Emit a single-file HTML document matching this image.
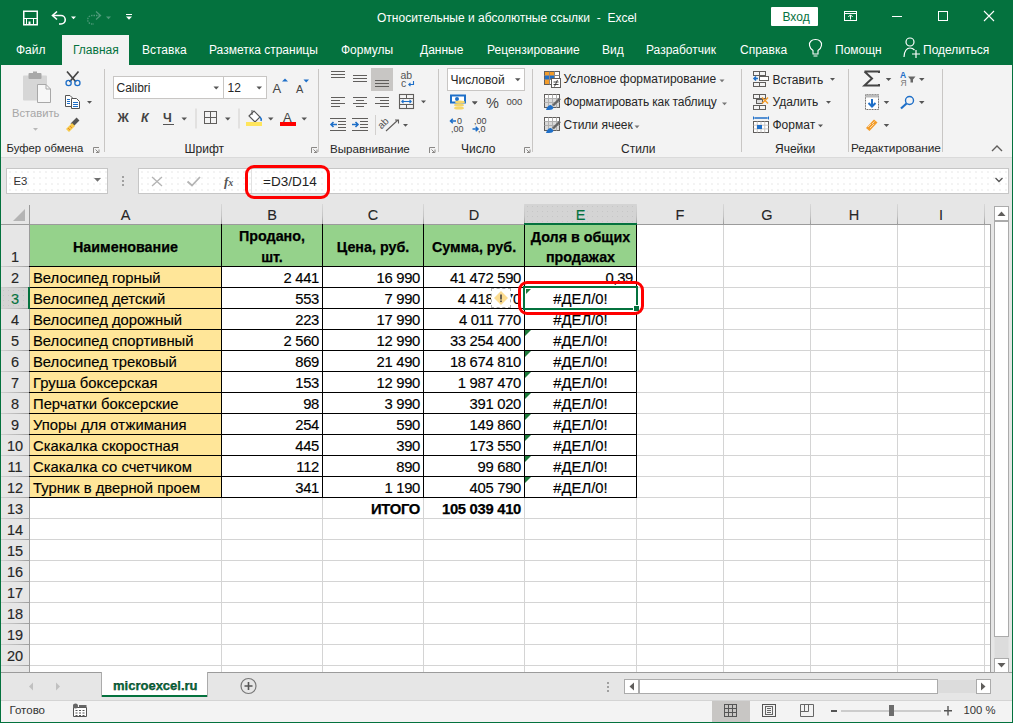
<!DOCTYPE html>
<html><head><meta charset="utf-8">
<style>
*{box-sizing:border-box;}
html,body{margin:0;padding:0;}
body{width:1013px;height:723px;position:relative;overflow:hidden;font-family:"Liberation Sans",sans-serif;background:#e6e6e6;}
.a{position:absolute;}
.t{position:absolute;white-space:nowrap;line-height:1;}
.tab{position:absolute;top:43px;font-size:12px;color:#fff;white-space:nowrap;line-height:14px;}
.glabel{position:absolute;top:143px;font-size:12px;color:#262626;white-space:nowrap;line-height:13px;}
.rt{position:absolute;font-size:12px;color:#262626;white-space:nowrap;line-height:13px;}
.dd{position:absolute;width:0;height:0;border-left:3px solid transparent;border-right:3px solid transparent;border-top:3px solid #5a5a5a;}
.colh{position:absolute;top:205px;height:19px;font-size:14.5px;color:#262626;-webkit-text-stroke:0.1px currentColor;text-align:center;line-height:20px;}
.rowh{position:absolute;left:1px;width:28px;font-size:14.5px;color:#262626;-webkit-text-stroke:0.15px currentColor;text-align:center;line-height:21px;height:20px;}
.c{position:absolute;font-size:14.8px;color:#000;-webkit-text-stroke:0.15px #000;white-space:nowrap;line-height:21px;height:20px;}
.r{text-align:right;letter-spacing:-0.3px;}
.ctr{text-align:center;}
.b{font-weight:bold;-webkit-text-stroke:0.25px #000;}
svg{position:absolute;overflow:visible;}
</style></head>
<body>

<div class="a" style="left:0;top:0;width:1013px;height:65px;background:#04723e;"></div>
<div class="t" style="left:377px;top:12px;font-size:12px;color:#fff;">Относительные и абсолютные ссылки&nbsp; -&nbsp; Excel</div>
<div class="a" style="left:62px;top:35px;width:67px;height:30px;background:#f3f3f3;"></div>
<div class="tab" style="left:16px;color:#fff;">Файл</div>
<div class="tab" style="left:73px;color:#04723e;">Главная</div>
<div class="tab" style="left:142px;color:#fff;">Вставка</div>
<div class="tab" style="left:209px;color:#fff;">Разметка страницы</div>
<div class="tab" style="left:341px;color:#fff;">Формулы</div>
<div class="tab" style="left:420px;color:#fff;">Данные</div>
<div class="tab" style="left:487px;color:#fff;">Рецензирование</div>
<div class="tab" style="left:602px;color:#fff;">Вид</div>
<div class="tab" style="left:646px;color:#fff;">Разработчик</div>
<div class="tab" style="left:740px;color:#fff;">Справка</div>
<div class="tab" style="left:835px;color:#fff;">Помощн</div>
<div class="tab" style="left:923px;color:#fff;">Поделиться</div>
<div class="a" style="left:0;top:65px;width:1013px;height:92px;background:#f3f3f3;"></div>
<div class="a" style="left:0;top:157px;width:1013px;height:1px;background:#dadada;"></div>
<div class="a" style="left:6px;top:168px;width:102px;height:26px;background:#fff radial-gradient(circle,#ededed 0.6px,transparent 0.9px) 0 0/6px 6px;border:1px solid #c6c6c6;"></div>
<div class="t" style="left:13.5px;top:176.2px;font-size:11.3px;color:#333;">E3</div>
<div class="a" style="left:138px;top:168px;width:871px;height:26px;background:#fff radial-gradient(circle,#ededed 0.6px,transparent 0.9px) 0 0/6px 6px;border:1px solid #c6c6c6;"></div>
<div class="t" style="left:263px;top:175px;font-size:13.5px;color:#222;">=D3/D14</div>
<div class="a" style="left:30px;top:225px;width:960px;height:447px;background:#fff;"></div>
<div class="a" style="left:1px;top:205px;width:989px;height:19px;background:#e6e6e6;"></div>
<div class="a" style="left:1px;top:225px;width:28px;height:447px;background:#e6e6e6;"></div>
<div class="a" style="left:525px;top:204px;width:111px;height:20px;background:#d4d4d4 radial-gradient(circle,#c6c6c6 0.7px,transparent 0.9px) 0 0/5px 5px;"></div>
<div class="a" style="left:1px;top:288px;width:28px;height:20px;background:#d4d4d4 radial-gradient(circle,#c6c6c6 0.7px,transparent 0.9px) 0 0/5px 5px;"></div>
<div class="a" style="left:30px;top:225px;width:606px;height:41px;background:#95d28b;"></div>
<div class="a" style="left:30px;top:267px;width:191px;height:230px;background:#ffe699;"></div>
<div class="a" style="left:221px;top:225px;width:1px;height:447px;background:#d4d4d4;"></div>
<div class="a" style="left:322px;top:225px;width:1px;height:447px;background:#d4d4d4;"></div>
<div class="a" style="left:423px;top:225px;width:1px;height:447px;background:#d4d4d4;"></div>
<div class="a" style="left:524px;top:225px;width:1px;height:447px;background:#d4d4d4;"></div>
<div class="a" style="left:636px;top:225px;width:1px;height:447px;background:#d4d4d4;"></div>
<div class="a" style="left:723px;top:225px;width:1px;height:447px;background:#d4d4d4;"></div>
<div class="a" style="left:810px;top:225px;width:1px;height:447px;background:#d4d4d4;"></div>
<div class="a" style="left:897px;top:225px;width:1px;height:447px;background:#d4d4d4;"></div>
<div class="a" style="left:984px;top:225px;width:1px;height:447px;background:#d4d4d4;"></div>
<div class="a" style="left:30px;top:266px;width:960px;height:1px;background:#d4d4d4;"></div>
<div class="a" style="left:30px;top:287px;width:960px;height:1px;background:#d4d4d4;"></div>
<div class="a" style="left:30px;top:308px;width:960px;height:1px;background:#d4d4d4;"></div>
<div class="a" style="left:30px;top:329px;width:960px;height:1px;background:#d4d4d4;"></div>
<div class="a" style="left:30px;top:350px;width:960px;height:1px;background:#d4d4d4;"></div>
<div class="a" style="left:30px;top:371px;width:960px;height:1px;background:#d4d4d4;"></div>
<div class="a" style="left:30px;top:392px;width:960px;height:1px;background:#d4d4d4;"></div>
<div class="a" style="left:30px;top:413px;width:960px;height:1px;background:#d4d4d4;"></div>
<div class="a" style="left:30px;top:434px;width:960px;height:1px;background:#d4d4d4;"></div>
<div class="a" style="left:30px;top:455px;width:960px;height:1px;background:#d4d4d4;"></div>
<div class="a" style="left:30px;top:476px;width:960px;height:1px;background:#d4d4d4;"></div>
<div class="a" style="left:30px;top:497px;width:960px;height:1px;background:#d4d4d4;"></div>
<div class="a" style="left:30px;top:518px;width:960px;height:1px;background:#d4d4d4;"></div>
<div class="a" style="left:30px;top:539px;width:960px;height:1px;background:#d4d4d4;"></div>
<div class="a" style="left:30px;top:560px;width:960px;height:1px;background:#d4d4d4;"></div>
<div class="a" style="left:30px;top:581px;width:960px;height:1px;background:#d4d4d4;"></div>
<div class="a" style="left:30px;top:602px;width:960px;height:1px;background:#d4d4d4;"></div>
<div class="a" style="left:30px;top:623px;width:960px;height:1px;background:#d4d4d4;"></div>
<div class="a" style="left:30px;top:644px;width:960px;height:1px;background:#d4d4d4;"></div>
<div class="a" style="left:30px;top:665px;width:960px;height:1px;background:#d4d4d4;"></div>
<div class="a" style="left:221px;top:204px;width:1px;height:20px;background:linear-gradient(#d8d8d8,#c4c4c4 60%,#9e9e9e);"></div>
<div class="a" style="left:322px;top:204px;width:1px;height:20px;background:linear-gradient(#d8d8d8,#c4c4c4 60%,#9e9e9e);"></div>
<div class="a" style="left:423px;top:204px;width:1px;height:20px;background:linear-gradient(#d8d8d8,#c4c4c4 60%,#9e9e9e);"></div>
<div class="a" style="left:524px;top:204px;width:1px;height:20px;background:linear-gradient(#d8d8d8,#c4c4c4 60%,#9e9e9e);"></div>
<div class="a" style="left:636px;top:204px;width:1px;height:20px;background:linear-gradient(#d8d8d8,#c4c4c4 60%,#9e9e9e);"></div>
<div class="a" style="left:723px;top:204px;width:1px;height:20px;background:linear-gradient(#d8d8d8,#c4c4c4 60%,#9e9e9e);"></div>
<div class="a" style="left:810px;top:204px;width:1px;height:20px;background:linear-gradient(#d8d8d8,#c4c4c4 60%,#9e9e9e);"></div>
<div class="a" style="left:897px;top:204px;width:1px;height:20px;background:linear-gradient(#d8d8d8,#c4c4c4 60%,#9e9e9e);"></div>
<div class="a" style="left:984px;top:204px;width:1px;height:20px;background:linear-gradient(#d8d8d8,#c4c4c4 60%,#9e9e9e);"></div>
<div class="a" style="left:1px;top:266px;width:28px;height:1px;background:linear-gradient(90deg,#d0d0d0,#b8b8b8 60%,#9e9e9e);"></div>
<div class="a" style="left:1px;top:287px;width:28px;height:1px;background:linear-gradient(90deg,#d0d0d0,#b8b8b8 60%,#9e9e9e);"></div>
<div class="a" style="left:1px;top:308px;width:28px;height:1px;background:linear-gradient(90deg,#d0d0d0,#b8b8b8 60%,#9e9e9e);"></div>
<div class="a" style="left:1px;top:329px;width:28px;height:1px;background:linear-gradient(90deg,#d0d0d0,#b8b8b8 60%,#9e9e9e);"></div>
<div class="a" style="left:1px;top:350px;width:28px;height:1px;background:linear-gradient(90deg,#d0d0d0,#b8b8b8 60%,#9e9e9e);"></div>
<div class="a" style="left:1px;top:371px;width:28px;height:1px;background:linear-gradient(90deg,#d0d0d0,#b8b8b8 60%,#9e9e9e);"></div>
<div class="a" style="left:1px;top:392px;width:28px;height:1px;background:linear-gradient(90deg,#d0d0d0,#b8b8b8 60%,#9e9e9e);"></div>
<div class="a" style="left:1px;top:413px;width:28px;height:1px;background:linear-gradient(90deg,#d0d0d0,#b8b8b8 60%,#9e9e9e);"></div>
<div class="a" style="left:1px;top:434px;width:28px;height:1px;background:linear-gradient(90deg,#d0d0d0,#b8b8b8 60%,#9e9e9e);"></div>
<div class="a" style="left:1px;top:455px;width:28px;height:1px;background:linear-gradient(90deg,#d0d0d0,#b8b8b8 60%,#9e9e9e);"></div>
<div class="a" style="left:1px;top:476px;width:28px;height:1px;background:linear-gradient(90deg,#d0d0d0,#b8b8b8 60%,#9e9e9e);"></div>
<div class="a" style="left:1px;top:497px;width:28px;height:1px;background:linear-gradient(90deg,#d0d0d0,#b8b8b8 60%,#9e9e9e);"></div>
<div class="a" style="left:1px;top:518px;width:28px;height:1px;background:linear-gradient(90deg,#d0d0d0,#b8b8b8 60%,#9e9e9e);"></div>
<div class="a" style="left:1px;top:539px;width:28px;height:1px;background:linear-gradient(90deg,#d0d0d0,#b8b8b8 60%,#9e9e9e);"></div>
<div class="a" style="left:1px;top:560px;width:28px;height:1px;background:linear-gradient(90deg,#d0d0d0,#b8b8b8 60%,#9e9e9e);"></div>
<div class="a" style="left:1px;top:581px;width:28px;height:1px;background:linear-gradient(90deg,#d0d0d0,#b8b8b8 60%,#9e9e9e);"></div>
<div class="a" style="left:1px;top:602px;width:28px;height:1px;background:linear-gradient(90deg,#d0d0d0,#b8b8b8 60%,#9e9e9e);"></div>
<div class="a" style="left:1px;top:623px;width:28px;height:1px;background:linear-gradient(90deg,#d0d0d0,#b8b8b8 60%,#9e9e9e);"></div>
<div class="a" style="left:1px;top:644px;width:28px;height:1px;background:linear-gradient(90deg,#d0d0d0,#b8b8b8 60%,#9e9e9e);"></div>
<div class="a" style="left:1px;top:665px;width:28px;height:1px;background:linear-gradient(90deg,#d0d0d0,#b8b8b8 60%,#9e9e9e);"></div>
<div class="a" style="left:1px;top:224px;width:989px;height:1px;background:#9b9b9b;"></div>
<div class="a" style="left:29px;top:205px;width:1px;height:467px;background:#9b9b9b;"></div>
<div class="a" style="left:990px;top:224px;width:1px;height:448px;background:#9b9b9b;"></div>
<svg style="left:12px;top:208px;" width="14" height="14"><polygon points="13,1 13,13 1,13" fill="#b4b4b4"/></svg>
<div class="a" style="left:29px;top:266px;width:608px;height:1px;background:#000;"></div>
<div class="a" style="left:29px;top:287px;width:608px;height:1px;background:#000;"></div>
<div class="a" style="left:29px;top:308px;width:608px;height:1px;background:#000;"></div>
<div class="a" style="left:29px;top:329px;width:608px;height:1px;background:#000;"></div>
<div class="a" style="left:29px;top:350px;width:608px;height:1px;background:#000;"></div>
<div class="a" style="left:29px;top:371px;width:608px;height:1px;background:#000;"></div>
<div class="a" style="left:29px;top:392px;width:608px;height:1px;background:#000;"></div>
<div class="a" style="left:29px;top:413px;width:608px;height:1px;background:#000;"></div>
<div class="a" style="left:29px;top:434px;width:608px;height:1px;background:#000;"></div>
<div class="a" style="left:29px;top:455px;width:608px;height:1px;background:#000;"></div>
<div class="a" style="left:29px;top:476px;width:608px;height:1px;background:#000;"></div>
<div class="a" style="left:29px;top:497px;width:608px;height:1px;background:#000;"></div>
<div class="a" style="left:221px;top:224px;width:1px;height:274px;background:#000;"></div>
<div class="a" style="left:322px;top:224px;width:1px;height:274px;background:#000;"></div>
<div class="a" style="left:423px;top:224px;width:1px;height:274px;background:#000;"></div>
<div class="a" style="left:524px;top:224px;width:1px;height:274px;background:#000;"></div>
<div class="a" style="left:636px;top:224px;width:1px;height:274px;background:#000;"></div>
<div class="a" style="left:524px;top:223px;width:113px;height:2px;background:#04723e;"></div>
<div class="a" style="left:28px;top:287px;width:2px;height:22px;background:#04723e;"></div>
<div class="colh" style="left:30px;width:191px;color:#262626;">A</div>
<div class="colh" style="left:222px;width:100px;color:#262626;">B</div>
<div class="colh" style="left:323px;width:100px;color:#262626;">C</div>
<div class="colh" style="left:424px;width:100px;color:#262626;">D</div>
<div class="colh" style="left:525px;width:111px;color:#04723e;">E</div>
<div class="colh" style="left:637px;width:86px;color:#262626;">F</div>
<div class="colh" style="left:724px;width:86px;color:#262626;">G</div>
<div class="colh" style="left:811px;width:86px;color:#262626;">H</div>
<div class="colh" style="left:898px;width:86px;color:#262626;">I</div>
<div class="rowh" style="top:247px;color:#262626;">1</div>
<div class="rowh" style="top:268px;color:#262626;">2</div>
<div class="rowh" style="top:289px;color:#04723e;">3</div>
<div class="rowh" style="top:310px;color:#262626;">4</div>
<div class="rowh" style="top:331px;color:#262626;">5</div>
<div class="rowh" style="top:352px;color:#262626;">6</div>
<div class="rowh" style="top:373px;color:#262626;">7</div>
<div class="rowh" style="top:394px;color:#262626;">8</div>
<div class="rowh" style="top:415px;color:#262626;">9</div>
<div class="rowh" style="top:436px;color:#262626;">10</div>
<div class="rowh" style="top:457px;color:#262626;">11</div>
<div class="rowh" style="top:478px;color:#262626;">12</div>
<div class="rowh" style="top:499px;color:#262626;">13</div>
<div class="rowh" style="top:520px;color:#262626;">14</div>
<div class="rowh" style="top:541px;color:#262626;">15</div>
<div class="rowh" style="top:562px;color:#262626;">16</div>
<div class="rowh" style="top:583px;color:#262626;">17</div>
<div class="rowh" style="top:604px;color:#262626;">18</div>
<div class="rowh" style="top:625px;color:#262626;">19</div>
<div class="rowh" style="top:646px;color:#262626;">20</div>
<div class="c " style="left:33px;top:268px;width:188px;">Велосипед горный</div>
<div class="c r" style="left:222px;top:268px;width:97px;">2 441</div>
<div class="c r" style="left:323px;top:268px;width:97px;">16 990</div>
<div class="c r" style="left:424px;top:268px;width:97px;">41 472 590</div>
<div class="c r" style="left:525px;top:268px;width:108px;">0,39</div>
<div class="c " style="left:33px;top:289px;width:188px;">Велосипед детский</div>
<div class="c r" style="left:222px;top:289px;width:97px;">553</div>
<div class="c r" style="left:323px;top:289px;width:97px;">7 990</div>
<div class="c r" style="left:424px;top:289px;width:97px;">4 418 470</div>
<div class="c ctr" style="left:525px;top:289px;width:111px;">#ДЕЛ/0!</div>
<div class="c " style="left:33px;top:310px;width:188px;">Велосипед дорожный</div>
<div class="c r" style="left:222px;top:310px;width:97px;">223</div>
<div class="c r" style="left:323px;top:310px;width:97px;">17 990</div>
<div class="c r" style="left:424px;top:310px;width:97px;">4 011 770</div>
<div class="c ctr" style="left:525px;top:310px;width:111px;">#ДЕЛ/0!</div>
<div class="c " style="left:33px;top:331px;width:188px;">Велосипед спортивный</div>
<div class="c r" style="left:222px;top:331px;width:97px;">2 560</div>
<div class="c r" style="left:323px;top:331px;width:97px;">12 990</div>
<div class="c r" style="left:424px;top:331px;width:97px;">33 254 400</div>
<div class="c ctr" style="left:525px;top:331px;width:111px;">#ДЕЛ/0!</div>
<div class="c " style="left:33px;top:352px;width:188px;">Велосипед трековый</div>
<div class="c r" style="left:222px;top:352px;width:97px;">869</div>
<div class="c r" style="left:323px;top:352px;width:97px;">21 490</div>
<div class="c r" style="left:424px;top:352px;width:97px;">18 674 810</div>
<div class="c ctr" style="left:525px;top:352px;width:111px;">#ДЕЛ/0!</div>
<div class="c " style="left:33px;top:373px;width:188px;">Груша боксерская</div>
<div class="c r" style="left:222px;top:373px;width:97px;">153</div>
<div class="c r" style="left:323px;top:373px;width:97px;">12 990</div>
<div class="c r" style="left:424px;top:373px;width:97px;">1 987 470</div>
<div class="c ctr" style="left:525px;top:373px;width:111px;">#ДЕЛ/0!</div>
<div class="c " style="left:33px;top:394px;width:188px;">Перчатки боксерские</div>
<div class="c r" style="left:222px;top:394px;width:97px;">98</div>
<div class="c r" style="left:323px;top:394px;width:97px;">3 990</div>
<div class="c r" style="left:424px;top:394px;width:97px;">391 020</div>
<div class="c ctr" style="left:525px;top:394px;width:111px;">#ДЕЛ/0!</div>
<div class="c " style="left:33px;top:415px;width:188px;">Упоры для отжимания</div>
<div class="c r" style="left:222px;top:415px;width:97px;">254</div>
<div class="c r" style="left:323px;top:415px;width:97px;">590</div>
<div class="c r" style="left:424px;top:415px;width:97px;">149 860</div>
<div class="c ctr" style="left:525px;top:415px;width:111px;">#ДЕЛ/0!</div>
<div class="c " style="left:33px;top:436px;width:188px;">Скакалка скоростная</div>
<div class="c r" style="left:222px;top:436px;width:97px;">445</div>
<div class="c r" style="left:323px;top:436px;width:97px;">390</div>
<div class="c r" style="left:424px;top:436px;width:97px;">173 550</div>
<div class="c ctr" style="left:525px;top:436px;width:111px;">#ДЕЛ/0!</div>
<div class="c " style="left:33px;top:457px;width:188px;">Скакалка со счетчиком</div>
<div class="c r" style="left:222px;top:457px;width:97px;">112</div>
<div class="c r" style="left:323px;top:457px;width:97px;">890</div>
<div class="c r" style="left:424px;top:457px;width:97px;">99 680</div>
<div class="c ctr" style="left:525px;top:457px;width:111px;">#ДЕЛ/0!</div>
<div class="c " style="left:33px;top:478px;width:188px;">Турник в дверной проем</div>
<div class="c r" style="left:222px;top:478px;width:97px;">341</div>
<div class="c r" style="left:323px;top:478px;width:97px;">1 190</div>
<div class="c r" style="left:424px;top:478px;width:97px;">405 790</div>
<div class="c ctr" style="left:525px;top:478px;width:111px;">#ДЕЛ/0!</div>
<div class="c r b" style="left:323px;top:499px;width:97px;">ИТОГО</div>
<div class="c r b" style="left:424px;top:499px;width:97px;">105 039 410</div>
<div class="t b ctr" style="left:30px;top:239.6px;width:191px;font-size:14.3px;color:#000;-webkit-text-stroke:0.25px #000;">Наименование</div>
<div class="t b ctr" style="left:222px;top:229.1px;width:100px;font-size:14.3px;color:#000;-webkit-text-stroke:0.25px #000;">Продано,</div>
<div class="t b ctr" style="left:222px;top:249.6px;width:100px;font-size:14.3px;color:#000;-webkit-text-stroke:0.25px #000;">шт.</div>
<div class="t b ctr" style="left:323px;top:239.6px;width:100px;font-size:14.3px;color:#000;-webkit-text-stroke:0.25px #000;">Цена, руб.</div>
<div class="t b ctr" style="left:424px;top:239.6px;width:100px;font-size:14.3px;color:#000;-webkit-text-stroke:0.25px #000;">Сумма, руб.</div>
<div class="t b ctr" style="left:525px;top:229.6px;width:111px;font-size:14.3px;color:#000;-webkit-text-stroke:0.25px #000;">Доля в общих</div>
<div class="t b ctr" style="left:525px;top:249.6px;width:111px;font-size:14.3px;color:#000;-webkit-text-stroke:0.25px #000;">продажах</div>
<svg style="left:525px;top:330px;" width="6" height="6"><polygon points="0,0 6,0 0,6" fill="#1d7a3a"/></svg>
<svg style="left:525px;top:351px;" width="6" height="6"><polygon points="0,0 6,0 0,6" fill="#1d7a3a"/></svg>
<svg style="left:525px;top:372px;" width="6" height="6"><polygon points="0,0 6,0 0,6" fill="#1d7a3a"/></svg>
<svg style="left:525px;top:393px;" width="6" height="6"><polygon points="0,0 6,0 0,6" fill="#1d7a3a"/></svg>
<svg style="left:525px;top:414px;" width="6" height="6"><polygon points="0,0 6,0 0,6" fill="#1d7a3a"/></svg>
<svg style="left:525px;top:435px;" width="6" height="6"><polygon points="0,0 6,0 0,6" fill="#1d7a3a"/></svg>
<svg style="left:525px;top:456px;" width="6" height="6"><polygon points="0,0 6,0 0,6" fill="#1d7a3a"/></svg>
<svg style="left:525px;top:477px;" width="6" height="6"><polygon points="0,0 6,0 0,6" fill="#1d7a3a"/></svg>
<div class="a" style="left:523px;top:286px;width:115px;height:24px;border:2px solid #04723e;"></div>
<div class="a" style="left:633px;top:305px;width:7px;height:7px;background:#fff;"></div>
<div class="a" style="left:634px;top:306px;width:5px;height:5px;background:#04723e;"></div>
<svg style="left:526px;top:289px;" width="5" height="5"><polygon points="0,0 5,0 0,5" fill="#1d7a3a"/></svg>
<div class="a" style="left:491px;top:288px;width:20px;height:20px;background:#fff;border:1px dashed #b0b0b0;"></div>
<svg style="left:493px;top:290px;" width="16" height="16"><polygon points="8,1 15,8 8,15 1,8" fill="#fcdc90"/><rect x="7.2" y="4.5" width="1.6" height="5" fill="#444"/><rect x="7.2" y="10.5" width="1.6" height="1.6" fill="#444"/></svg>
<div class="a" style="left:518px;top:281px;width:126px;height:34px;border:3px solid #ff0000;border-radius:9px;"></div>
<div class="a" style="left:245px;top:165px;width:85px;height:34px;border:3px solid #ff0000;border-radius:9px;"></div>
<div class="a" style="left:1px;top:672px;width:1011px;height:1px;background:#9b9b9b;"></div>
<div class="a" style="left:1px;top:673px;width:1011px;height:27px;background:#e6e6e6;"></div>
<div class="a" style="left:101px;top:672px;width:107px;height:25px;background:#fff;border-left:1px solid #ababab;border-right:1px solid #ababab;"></div>
<div class="a" style="left:102px;top:695px;width:105px;height:2px;background:#04723e;"></div>
<div class="t b" style="left:113px;top:679px;font-size:13px;color:#04723e;">microexcel.ru</div>
<div class="a" style="left:1px;top:700px;width:1011px;height:1px;background:#d4d4d4;"></div>
<div class="a" style="left:1px;top:701px;width:1011px;height:21px;background:#f3f3f3;"></div>
<div class="t" style="left:9.5px;top:704.5px;font-size:11.5px;color:#333;">Готово</div>
<div class="a" style="left:712px;top:701px;width:37px;height:21px;background:#d2d2d2;"></div>
<div class="t" style="left:963.5px;top:705px;font-size:11.3px;color:#333;">100 %</div>
<svg style="left:0;top:0;" width="1013" height="723"><rect x="23.75" y="11.25" width="13.5" height="13.5" fill="none" stroke="#fff" stroke-width="1.5" /><line x1="24" y1="18.5" x2="37" y2="18.5" stroke="#fff" stroke-width="1"/><path d="M26.5 25 V18.5 M33.5 25 V18.5" fill="none" stroke="#fff" stroke-width="1" /><rect x="28.5" y="21.5" width="2" height="3.5" fill="#fff" stroke="none" stroke-width="1" /><path d="M53 15.5 H61 A4.2 4.2 0 0 1 61 24 H59" fill="none" stroke="#fff" stroke-width="1.6" /><path d="M57 11.5 L52.5 15.5 L57 19.5" fill="none" stroke="#fff" stroke-width="1.6" /><polygon points="71.0,16.5 76.0,16.5 73.5,19.2" fill="#fff"/><path d="M100 15.5 H92 A4.2 4.2 0 0 0 92 24 H94" fill="none" stroke="#4f9a7a" stroke-width="1.3" stroke-dasharray="1.5 1"/><path d="M96 11.5 L100.5 15.5 L96 19.5" fill="none" stroke="#4f9a7a" stroke-width="1.3" /><polygon points="106.0,16.5 111.0,16.5 108.5,19.2" fill="#4f9a7a"/><rect x="126" y="14" width="6" height="1" fill="#fff" stroke="none" stroke-width="1" /><polygon points="126.0,16.5 132.0,16.5 129.0,19.8" fill="#fff"/><rect x="771" y="7" width="47" height="19" fill="#fff" stroke="none" stroke-width="1" rx="1"/><rect x="844.5" y="11.5" width="12" height="9" fill="none" stroke="#fff" stroke-width="1" /><line x1="844.5" y1="13.5" x2="856.5" y2="13.5" stroke="#fff" stroke-width="1"/><path d="M850.5 19.5 V15 M848.3 17 L850.5 14.8 L852.7 17" fill="none" stroke="#fff" stroke-width="1" /><line x1="892" y1="16.5" x2="902" y2="16.5" stroke="#fff" stroke-width="1"/><rect x="938.5" y="11.5" width="9" height="9" fill="none" stroke="#fff" stroke-width="1" /><path d="M984 11 L994 21 M994 11 L984 21" fill="none" stroke="#fff" stroke-width="1.1" /><path d="M813 54 V50.5 C809 48 808.5 43 811 41 C813 39 818 39 820 41 C822.5 43 822 48 818 50.5 V54 Z" fill="none" stroke="#fff" stroke-width="1.1" /><line x1="813.5" y1="56" x2="817.5" y2="56" stroke="#fff" stroke-width="1"/><path d="M910 42 m-4 0 a4 4 0 1 0 8 0 a4 4 0 1 0 -8 0 M904 57 C904 51 907 48 910 48 C912 48 913.5 49 914.5 50" fill="none" stroke="#fff" stroke-width="1.2" /><path d="M916 50 V58 M912 54 H920" fill="none" stroke="#fff" stroke-width="1.2" /><rect x="104" y="69" width="1" height="83" fill="#c8c6c4" stroke="none" stroke-width="1" /><rect x="318" y="69" width="1" height="83" fill="#c8c6c4" stroke="none" stroke-width="1" /><rect x="438" y="69" width="1" height="83" fill="#c8c6c4" stroke="none" stroke-width="1" /><rect x="532" y="69" width="1" height="83" fill="#c8c6c4" stroke="none" stroke-width="1" /><rect x="741" y="69" width="1" height="83" fill="#c8c6c4" stroke="none" stroke-width="1" /><rect x="848" y="69" width="1" height="83" fill="#c8c6c4" stroke="none" stroke-width="1" /><rect x="942" y="69" width="1" height="83" fill="#c8c6c4" stroke="none" stroke-width="1" /><path d="M93.5 147.5 H99.0 M93.5 147.5 V153.0" fill="none" stroke="#8a8886" stroke-width="1" /><path d="M95.5 149.5 L98.5 152.5 M96.0 152.5 H99.0 V149.5" fill="none" stroke="#8a8886" stroke-width="1" /><path d="M311.5 147.5 H317.0 M311.5 147.5 V153.0" fill="none" stroke="#8a8886" stroke-width="1" /><path d="M313.5 149.5 L316.5 152.5 M314.0 152.5 H317.0 V149.5" fill="none" stroke="#8a8886" stroke-width="1" /><path d="M429.5 147.5 H435.0 M429.5 147.5 V153.0" fill="none" stroke="#8a8886" stroke-width="1" /><path d="M431.5 149.5 L434.5 152.5 M432.0 152.5 H435.0 V149.5" fill="none" stroke="#8a8886" stroke-width="1" /><path d="M524.5 147.5 H530.0 M524.5 147.5 V153.0" fill="none" stroke="#8a8886" stroke-width="1" /><path d="M526.5 149.5 L529.5 152.5 M527.0 152.5 H530.0 V149.5" fill="none" stroke="#8a8886" stroke-width="1" /><path d="M992 151 L997 146 L1002 151" fill="none" stroke="#605e5c" stroke-width="1.4" /><rect x="23" y="75.5" width="24" height="25" fill="#d6d6d6" stroke="none" stroke-width="1" rx="1"/><rect x="28.5" y="73" width="13" height="6" fill="#a8a8a8" stroke="none" stroke-width="1" rx="1"/><rect x="33" y="71.5" width="4" height="3" fill="#a8a8a8" stroke="none" stroke-width="1" /><path d="M37.5 84.5 H46 L50.5 89 V102.5 H37.5 Z" fill="#f7f7f7" stroke="#a8a8a8" stroke-width="1" /><path d="M46 84.5 V89 H50.5" fill="none" stroke="#a8a8a8" stroke-width="1" /><polygon points="33.0,128.0 38.0,128.0 35.5,130.8" fill="#b8b8b8"/><path d="M67 71.5 L76 82 M78.5 71.5 L69.5 82" fill="none" stroke="#444" stroke-width="1.7" /><circle cx="68.6" cy="83" r="2.6" fill="none" stroke="#1e6fc8" stroke-width="1.3"/><circle cx="77.4" cy="83" r="2.6" fill="none" stroke="#1e6fc8" stroke-width="1.3"/><path d="M65.5 95.5 H70 L72.5 98 V106.5 H65.5 Z" fill="#fff" stroke="#555" stroke-width="1" /><path d="M71.5 98.5 H76.5 L79.5 101.5 V108.5 H71.5 Z" fill="#fff" stroke="#555" stroke-width="1" /><line x1="67" y1="99.5" x2="70" y2="99.5" stroke="#1e6fc8" stroke-width="1"/><line x1="67" y1="101.5" x2="70" y2="101.5" stroke="#1e6fc8" stroke-width="1"/><line x1="67" y1="103.5" x2="70" y2="103.5" stroke="#1e6fc8" stroke-width="1"/><line x1="73" y1="102.5" x2="78" y2="102.5" stroke="#1e6fc8" stroke-width="1"/><line x1="73" y1="104.5" x2="78" y2="104.5" stroke="#1e6fc8" stroke-width="1"/><line x1="73" y1="106.5" x2="78" y2="106.5" stroke="#1e6fc8" stroke-width="1"/><polygon points="87.0,101.0 92.0,101.0 89.5,103.8" fill="#555"/><path d="M72 125 L78 119" fill="none" stroke="#555" stroke-width="4" /><path d="M66 129 L72 123 L75 126 L69 132 Z" fill="#f7c94a" stroke="none" stroke-width="1" /><path d="M68 128 L70 130 M70 126 L72 128" fill="none" stroke="#e8872c" stroke-width="1" /><rect x="113.5" y="76.5" width="110" height="22" fill="#fff" stroke="#c8c6c4" stroke-width="1" /><rect x="223.5" y="76.5" width="43" height="22" fill="#fff" stroke="#c8c6c4" stroke-width="1" /><polygon points="213.5,86.5 219.0,86.5 216.2,89.5" fill="#555"/><polygon points="256.5,86.5 262.0,86.5 259.2,89.5" fill="#555"/><path d="M282 81.5 L285 78.5 L288 81.5 Z" fill="#1e6fc8" stroke="none" stroke-width="1" /><path d="M303.5 79.5 L309 79.5 L306.2 82.5 Z" fill="#1e6fc8" stroke="none" stroke-width="1" /><line x1="163" y1="124.5" x2="174" y2="124.5" stroke="#555" stroke-width="1"/><polygon points="181.5,117.5 187.0,117.5 184.2,120.5" fill="#555"/><rect x="195.5" y="108.5" width="1" height="20" fill="#d2d0ce" stroke="none" stroke-width="1" /><rect x="204.5" y="111.5" width="12" height="12" fill="none" stroke="#605e5c" stroke-width="1" /><line x1="210.5" y1="111.5" x2="210.5" y2="123.5" stroke="#605e5c" stroke-width="1"/><line x1="204.5" y1="117.5" x2="216.5" y2="117.5" stroke="#605e5c" stroke-width="1"/><polygon points="225.0,117.5 230.5,117.5 227.8,120.5" fill="#555"/><rect x="238.5" y="108.5" width="1" height="20" fill="#d2d0ce" stroke="none" stroke-width="1" /><path d="M249 116 L254 111 L260 117 L255 122 Z" fill="#fff" stroke="#555" stroke-width="1.1" /><path d="M252 110 V115" fill="none" stroke="#555" stroke-width="1" /><path d="M260 117 Q262 119 261 121" fill="none" stroke="#1e6fc8" stroke-width="1.6" /><rect x="246" y="122" width="16" height="4" fill="#ffe55c" stroke="none" stroke-width="1" /><polygon points="268.0,117.5 273.5,117.5 270.8,120.5" fill="#555"/><rect x="280" y="122" width="16" height="4" fill="#ff0000" stroke="none" stroke-width="1" /><polygon points="301.5,117.5 307.0,117.5 304.2,120.5" fill="#555"/><line x1="331" y1="71.5" x2="345" y2="71.5" stroke="#605e5c" stroke-width="1"/><line x1="331" y1="74.5" x2="345" y2="74.5" stroke="#605e5c" stroke-width="1"/><line x1="331" y1="77.5" x2="345" y2="77.5" stroke="#605e5c" stroke-width="1"/><line x1="353" y1="75.5" x2="367" y2="75.5" stroke="#605e5c" stroke-width="1"/><line x1="353" y1="78.5" x2="367" y2="78.5" stroke="#605e5c" stroke-width="1"/><line x1="353" y1="81.5" x2="367" y2="81.5" stroke="#605e5c" stroke-width="1"/><rect x="371" y="68" width="22" height="23" fill="#c8c6c4" stroke="none" stroke-width="1" /><line x1="375" y1="80.5" x2="389" y2="80.5" stroke="#605e5c" stroke-width="1"/><line x1="375" y1="83.5" x2="389" y2="83.5" stroke="#605e5c" stroke-width="1"/><line x1="375" y1="86.5" x2="389" y2="86.5" stroke="#605e5c" stroke-width="1"/><path d="M413.5 81 V84.5 H409" fill="none" stroke="#1e6fc8" stroke-width="1.1" /><path d="M410.5 82.8 L408.8 84.5 L410.5 86.2" fill="none" stroke="#1e6fc8" stroke-width="1.1" /><line x1="331" y1="97.5" x2="345" y2="97.5" stroke="#605e5c" stroke-width="1"/><line x1="353" y1="97.5" x2="367" y2="97.5" stroke="#605e5c" stroke-width="1"/><line x1="375" y1="97.5" x2="389" y2="97.5" stroke="#605e5c" stroke-width="1"/><line x1="331" y1="100.5" x2="340" y2="100.5" stroke="#605e5c" stroke-width="1"/><line x1="356" y1="100.5" x2="364" y2="100.5" stroke="#605e5c" stroke-width="1"/><line x1="380" y1="100.5" x2="389" y2="100.5" stroke="#605e5c" stroke-width="1"/><line x1="331" y1="103.5" x2="345" y2="103.5" stroke="#605e5c" stroke-width="1"/><line x1="353" y1="103.5" x2="367" y2="103.5" stroke="#605e5c" stroke-width="1"/><line x1="375" y1="103.5" x2="389" y2="103.5" stroke="#605e5c" stroke-width="1"/><line x1="331" y1="106.5" x2="340" y2="106.5" stroke="#605e5c" stroke-width="1"/><line x1="356" y1="106.5" x2="364" y2="106.5" stroke="#605e5c" stroke-width="1"/><line x1="380" y1="106.5" x2="389" y2="106.5" stroke="#605e5c" stroke-width="1"/><rect x="399.5" y="94.5" width="14" height="14" fill="none" stroke="#605e5c" stroke-width="1.1" /><line x1="399.5" y1="98.5" x2="413.5" y2="98.5" stroke="#605e5c" stroke-width="1"/><line x1="399.5" y1="104.5" x2="413.5" y2="104.5" stroke="#605e5c" stroke-width="1"/><line x1="406.5" y1="94.5" x2="406.5" y2="98.5" stroke="#605e5c" stroke-width="1"/><line x1="406.5" y1="104.5" x2="406.5" y2="108.5" stroke="#605e5c" stroke-width="1"/><path d="M402 101.5 H411 M403.5 99.8 L401.8 101.5 L403.5 103.2 M409.5 99.8 L411.2 101.5 L409.5 103.2" fill="none" stroke="#1e6fc8" stroke-width="1.1" /><polygon points="421.0,100.5 426.0,100.5 423.5,103.2" fill="#555"/><line x1="330" y1="118.5" x2="346" y2="118.5" stroke="#605e5c" stroke-width="1"/><line x1="330" y1="130.5" x2="346" y2="130.5" stroke="#605e5c" stroke-width="1"/><line x1="338" y1="121.5" x2="346" y2="121.5" stroke="#605e5c" stroke-width="1"/><line x1="338" y1="124.5" x2="346" y2="124.5" stroke="#605e5c" stroke-width="1"/><line x1="338" y1="127.5" x2="346" y2="127.5" stroke="#605e5c" stroke-width="1"/><path d="M337 124.5 H331 M333.5 122 L331 124.5 L333.5 127" fill="none" stroke="#1e6fc8" stroke-width="1.6" /><line x1="352" y1="118.5" x2="368" y2="118.5" stroke="#605e5c" stroke-width="1"/><line x1="352" y1="130.5" x2="368" y2="130.5" stroke="#605e5c" stroke-width="1"/><line x1="360" y1="121.5" x2="368" y2="121.5" stroke="#605e5c" stroke-width="1"/><line x1="360" y1="124.5" x2="368" y2="124.5" stroke="#605e5c" stroke-width="1"/><line x1="360" y1="127.5" x2="368" y2="127.5" stroke="#605e5c" stroke-width="1"/><path d="M352 124.5 H358 M355.5 122 L358 124.5 L355.5 127" fill="none" stroke="#1e6fc8" stroke-width="1.6" /><rect x="375" y="115" width="1" height="20" fill="#d2d0ce" stroke="none" stroke-width="1" /><path d="M386 131 L398 120 M395 120 H398.5 V123.5" fill="none" stroke="#605e5c" stroke-width="1.1" /><polygon points="403.0,124.0 408.0,124.0 405.5,126.8" fill="#555"/><rect x="447.5" y="68.5" width="77" height="22" fill="#fff" stroke="#c8c6c4" stroke-width="1" /><polygon points="515.0,78.3 520.5,78.3 517.8,81.3" fill="#555"/><rect x="450" y="94.5" width="16" height="9" fill="#1e6fc8" stroke="none" stroke-width="1" /><rect x="452" y="96.5" width="12" height="5" fill="#fff" stroke="none" stroke-width="1" /><circle cx="457" cy="99" r="2" fill="#1e6fc8"/><ellipse cx="460" cy="102" rx="5" ry="1.6" fill="#f5d66b"/><ellipse cx="459" cy="105" rx="5" ry="1.6" fill="#f5d66b"/><ellipse cx="459" cy="108" rx="5" ry="1.6" fill="#f5d66b"/><polygon points="472.0,101.5 477.5,101.5 474.8,104.5" fill="#555"/><polygon points="472.0,101.5 477.5,101.5 474.8,104.5" fill="#555"/><path d="M456 121 H450.5 M452.8 118.8 L450.5 121 L452.8 123.2" fill="none" stroke="#1e6fc8" stroke-width="1.5" /><path d="M472.5 129 H478 M475.7 126.8 L478 129 L475.7 131.2" fill="none" stroke="#1e6fc8" stroke-width="1.5" /><rect x="544.5" y="71.5" width="15" height="13" fill="#fff" stroke="#605e5c" stroke-width="1" /><rect x="545" y="72" width="9.5" height="3.5" fill="#f39c2a" stroke="none" stroke-width="1" /><rect x="545" y="76" width="9.5" height="3.5" fill="#1e6fc8" stroke="none" stroke-width="1" /><rect x="545" y="80" width="4.5" height="4" fill="#f39c2a" stroke="none" stroke-width="1" /><line x1="549.5" y1="71.5" x2="549.5" y2="84.5" stroke="#8a8886" stroke-width="1"/><line x1="554.5" y1="71.5" x2="554.5" y2="84.5" stroke="#8a8886" stroke-width="1"/><line x1="544.5" y1="75.5" x2="559.5" y2="75.5" stroke="#8a8886" stroke-width="1"/><line x1="544.5" y1="79.5" x2="559.5" y2="79.5" stroke="#8a8886" stroke-width="1"/><rect x="551.5" y="78.5" width="9" height="9" fill="#fff" stroke="#605e5c" stroke-width="1" /><path d="M553.5 82 H558.5 M553.5 84.5 H558.5 M557.5 80 L554.5 86.5" fill="none" stroke="#333" stroke-width="0.9" /><rect x="544.5" y="94.5" width="15" height="13" fill="#fff" stroke="#605e5c" stroke-width="1" /><rect x="545" y="99" width="14" height="8" fill="#d9d9d9" stroke="none" stroke-width="1" /><line x1="548.5" y1="94.5" x2="548.5" y2="107.5" stroke="#b0b0b0" stroke-width="1"/><line x1="552.5" y1="94.5" x2="552.5" y2="107.5" stroke="#b0b0b0" stroke-width="1"/><line x1="556.5" y1="94.5" x2="556.5" y2="107.5" stroke="#b0b0b0" stroke-width="1"/><line x1="544.5" y1="98.5" x2="559.5" y2="98.5" stroke="#b0b0b0" stroke-width="1"/><line x1="544.5" y1="102.5" x2="559.5" y2="102.5" stroke="#b0b0b0" stroke-width="1"/><path d="M553 105.5 L560 98.5" fill="none" stroke="#666" stroke-width="2.4" /><path d="M546 110 Q547.5 105 551 105 L553.5 107.5 Q553 110 549 110 Z" fill="#1e6fc8" stroke="none" stroke-width="1" /><rect x="544.5" y="117.5" width="15" height="13" fill="#fff" stroke="#605e5c" stroke-width="1" /><rect x="545" y="122" width="14" height="8" fill="#d9d9d9" stroke="none" stroke-width="1" /><line x1="548.5" y1="117.5" x2="548.5" y2="130.5" stroke="#b0b0b0" stroke-width="1"/><line x1="552.5" y1="117.5" x2="552.5" y2="130.5" stroke="#b0b0b0" stroke-width="1"/><line x1="556.5" y1="117.5" x2="556.5" y2="130.5" stroke="#b0b0b0" stroke-width="1"/><line x1="544.5" y1="121.5" x2="559.5" y2="121.5" stroke="#b0b0b0" stroke-width="1"/><line x1="544.5" y1="125.5" x2="559.5" y2="125.5" stroke="#b0b0b0" stroke-width="1"/><path d="M553 128.5 L560 121.5" fill="none" stroke="#666" stroke-width="2.4" /><path d="M546 133 Q547.5 128 551 128 L553.5 130.5 Q553 133 549 133 Z" fill="#1e6fc8" stroke="none" stroke-width="1" /><rect x="753.5" y="71.5" width="6" height="4" fill="none" stroke="#605e5c" stroke-width="1" /><rect x="759.5" y="71.5" width="6" height="4" fill="none" stroke="#605e5c" stroke-width="1" /><rect x="753.5" y="82.5" width="6" height="4" fill="none" stroke="#605e5c" stroke-width="1" /><rect x="759.5" y="82.5" width="6" height="4" fill="none" stroke="#605e5c" stroke-width="1" /><rect x="759.5" y="76.5" width="9" height="4" fill="#fff" stroke="#605e5c" stroke-width="1" /><path d="M758 78.5 H754 M756 76.5 L754 78.5 L756 80.5" fill="none" stroke="#1e6fc8" stroke-width="1.6" /><polygon points="830.0,78.0 835.0,78.0 832.5,80.8" fill="#555"/><rect x="753.5" y="94.5" width="6" height="4" fill="none" stroke="#605e5c" stroke-width="1" /><rect x="759.5" y="94.5" width="6" height="4" fill="none" stroke="#605e5c" stroke-width="1" /><rect x="753.5" y="105.5" width="6" height="4" fill="none" stroke="#605e5c" stroke-width="1" /><rect x="759.5" y="105.5" width="6" height="4" fill="none" stroke="#605e5c" stroke-width="1" /><rect x="756.5" y="99.5" width="6" height="4" fill="#ddd" stroke="#605e5c" stroke-width="1" /><path d="M762 97.5 L768 103.5 M768 97.5 L762 103.5" fill="none" stroke="#f39c2a" stroke-width="1.5" /><polygon points="826.0,101.0 831.0,101.0 828.5,103.8" fill="#555"/><path d="M753.5 118 H768.5 M753.5 116.5 V119.5 M768.5 116.5 V119.5 M755 118 H767" fill="none" stroke="#1e6fc8" stroke-width="1" /><rect x="753.5" y="121.5" width="15" height="11" fill="#fff" stroke="#605e5c" stroke-width="1" /><line x1="757.25" y1="121.5" x2="757.25" y2="132.5" stroke="#c8c6c4" stroke-width="1"/><line x1="761.0" y1="121.5" x2="761.0" y2="132.5" stroke="#c8c6c4" stroke-width="1"/><line x1="764.75" y1="121.5" x2="764.75" y2="132.5" stroke="#c8c6c4" stroke-width="1"/><line x1="753.5" y1="125.2" x2="768.5" y2="125.2" stroke="#c8c6c4" stroke-width="1"/><line x1="753.5" y1="128.9" x2="768.5" y2="128.9" stroke="#c8c6c4" stroke-width="1"/><rect x="757" y="125" width="5" height="4" fill="#1e6fc8" stroke="none" stroke-width="1" /><polygon points="818.0,124.5 823.0,124.5 820.5,127.2" fill="#555"/><path d="M864.5 71.5 H879 V73 M864.5 71.5 L872 78.5 L864.5 85.5 H879 V84" fill="none" stroke="#444" stroke-width="2" /><polygon points="885.8,78.0 891.3,78.0 888.5,81.0" fill="#555"/><path d="M908 76.5 H915.5 L913 79.5 V82.5 H910.5 V79.5 Z" fill="#666" stroke="none" stroke-width="1" /><polygon points="919.0,78.0 924.5,78.0 921.8,81.0" fill="#555"/><rect x="865.5" y="94.5" width="13" height="15" fill="#fff" stroke="#605e5c" stroke-width="1" stroke-dasharray="1 0.6"/><rect x="865.5" y="94.5" width="13" height="3" fill="#bbb" stroke="none" stroke-width="1" /><path d="M872 99 V106 M868.5 103 L872 106.5 L875.5 103" fill="none" stroke="#1e6fc8" stroke-width="2" /><polygon points="883.7,101.0 889.2,101.0 886.5,104.0" fill="#555"/><circle cx="909.5" cy="100.5" r="4" fill="none" stroke="#1e6fc8" stroke-width="1.4"/><path d="M906.5 103.5 L901 108.5" fill="none" stroke="#1e6fc8" stroke-width="2.2" /><polygon points="919.0,101.0 924.5,101.0 921.8,104.0" fill="#555"/><path d="M866 128 L874 119.5 L877.5 122.5 L869.5 131 Z" fill="#f39c2a" stroke="none" stroke-width="1" /><path d="M868 127 L871 124 M870 128 L874 124 M872 124 L874.5 121.5" fill="none" stroke="#fff" stroke-width="0.6" /><polygon points="883.7,124.0 889.2,124.0 886.5,127.0" fill="#555"/><rect x="122" y="176" width="2" height="2" fill="#a0a0a0" stroke="none" stroke-width="1" /><rect x="122" y="180" width="2" height="2" fill="#a0a0a0" stroke="none" stroke-width="1" /><rect x="122" y="184" width="2" height="2" fill="#a0a0a0" stroke="none" stroke-width="1" /><path d="M152 177 L162 186 M162 177 L152 186" fill="none" stroke="#b4b4b4" stroke-width="1.3" /><path d="M187.5 181.5 L192 185.5 L200 177" fill="none" stroke="#b4b4b4" stroke-width="1.8" /><rect x="251" y="169" width="1" height="24" fill="#e1e1e1" stroke="none" stroke-width="1" /><path d="M995.5 178 L999 181.5 L1002.5 178" fill="none" stroke="#555" stroke-width="1.3" /><polygon points="94.0,178.0 101.0,178.0 97.5,181.8" fill="#707070"/><rect x="994.5" y="206.5" width="14" height="14" fill="#fff" stroke="#ababab" stroke-width="1" /><path d="M997.5 216 L1001.5 211.5 L1005.5 216 Z" fill="#605e5c" stroke="none" stroke-width="1" /><rect x="994.5" y="221.5" width="14" height="415" fill="#fff" stroke="#ababab" stroke-width="1" /><rect x="994.5" y="637" width="14" height="21" fill="#dcdcdc" stroke="none" stroke-width="1" /><rect x="994.5" y="658.5" width="14" height="14" fill="#fff" stroke="#ababab" stroke-width="1" /><path d="M997.5 663 L1001.5 667.5 L1005.5 663 Z" fill="#605e5c" stroke="none" stroke-width="1" /><rect x="607" y="682" width="2" height="2" fill="#a0a0a0" stroke="none" stroke-width="1" /><rect x="607" y="686" width="2" height="2" fill="#a0a0a0" stroke="none" stroke-width="1" /><rect x="607" y="690" width="2" height="2" fill="#a0a0a0" stroke="none" stroke-width="1" /><rect x="624.5" y="679.5" width="14" height="14" fill="#fff" stroke="#ababab" stroke-width="1" /><path d="M634 682.5 L629.5 686.5 L634 690.5 Z" fill="#605e5c" stroke="none" stroke-width="1" /><rect x="639.5" y="679.5" width="298" height="14" fill="#fff" stroke="#ababab" stroke-width="1" /><rect x="938" y="680" width="38" height="13" fill="#dcdcdc" stroke="none" stroke-width="1" /><rect x="976.5" y="679.5" width="14" height="14" fill="#fff" stroke="#ababab" stroke-width="1" /><path d="M981 682.5 L985.5 686.5 L981 690.5 Z" fill="#605e5c" stroke="none" stroke-width="1" /><path d="M33 682.5 L29 686.5 L33 690.5 Z" fill="#c0c0c0" stroke="none" stroke-width="1" /><path d="M56 682.5 L60 686.5 L56 690.5 Z" fill="#c0c0c0" stroke="none" stroke-width="1" /><circle cx="248.5" cy="686" r="7.5" fill="none" stroke="#777" stroke-width="1.2"/><path d="M248.5 682 V690 M244.5 686 H252.5" fill="none" stroke="#555" stroke-width="1.6" /><path d="M73.5 707.5 H86.5 V716.5 H73.5 Z" fill="#fff" stroke="#555" stroke-width="1" /><rect x="73.5" y="704.5" width="3" height="3" fill="#555" stroke="none" stroke-width="1" /><circle cx="75.5" cy="706" r="2.5" fill="#666"/><rect x="79" y="705" width="7.5" height="2.5" fill="#666" stroke="none" stroke-width="1" /><rect x="75.5" y="710" width="2" height="1" fill="#555" stroke="none" stroke-width="1" /><rect x="79" y="710" width="2" height="1" fill="#555" stroke="none" stroke-width="1" /><rect x="82.5" y="710" width="2" height="1" fill="#555" stroke="none" stroke-width="1" /><rect x="75.5" y="712.5" width="2" height="1" fill="#555" stroke="none" stroke-width="1" /><rect x="79" y="712.5" width="2" height="1" fill="#555" stroke="none" stroke-width="1" /><rect x="82.5" y="712.5" width="2" height="1" fill="#555" stroke="none" stroke-width="1" /><rect x="75.5" y="715" width="2" height="1" fill="#555" stroke="none" stroke-width="1" /><rect x="79" y="715" width="2" height="1" fill="#555" stroke="none" stroke-width="1" /><rect x="82.5" y="715" width="2" height="1" fill="#555" stroke="none" stroke-width="1" /><rect x="712" y="701" width="38" height="21" fill="#c8c6c4" stroke="none" stroke-width="1" /><rect x="724.5" y="704.5" width="12" height="12" fill="none" stroke="#555" stroke-width="1" /><line x1="728.5" y1="704.5" x2="728.5" y2="716.5" stroke="#555" stroke-width="1"/><line x1="724.5" y1="708.5" x2="736.5" y2="708.5" stroke="#555" stroke-width="1"/><line x1="732.5" y1="704.5" x2="732.5" y2="716.5" stroke="#555" stroke-width="1"/><line x1="724.5" y1="712.5" x2="736.5" y2="712.5" stroke="#555" stroke-width="1"/><rect x="762.5" y="704.5" width="13" height="12" fill="none" stroke="#555" stroke-width="1" /><rect x="765.5" y="706.5" width="7" height="8" fill="none" stroke="#666" stroke-width="1" /><line x1="767" y1="708.5" x2="771" y2="708.5" stroke="#666" stroke-width="1"/><line x1="767" y1="710.5" x2="771" y2="710.5" stroke="#666" stroke-width="1"/><line x1="767" y1="712.5" x2="771" y2="712.5" stroke="#666" stroke-width="1"/><path d="M800.5 704.5 H813.5 V716.5 H800.5 Z M800.5 711.5 H808.5 V704.5 M804.5 704.5 V711.5" fill="none" stroke="#666" stroke-width="1" /><rect x="831" y="710" width="6" height="2" fill="#555" stroke="none" stroke-width="1" /><rect x="841" y="710.5" width="100" height="1" fill="#a6a6a6" stroke="none" stroke-width="1" /><rect x="889" y="705" width="5" height="11" fill="#6d6d6d" stroke="none" stroke-width="1" /><path d="M948 706 V715.5 M944 710.8 H952" fill="none" stroke="#555" stroke-width="1.4" /><polygon points="719.5,79.5 724.5,79.5 722.0,82.2" fill="#777"/><polygon points="722.0,102.5 727.0,102.5 724.5,105.2" fill="#777"/><polygon points="634.5,125.5 639.5,125.5 637.0,128.2" fill="#777"/></svg>
<div class="t" style="left:12.0px;top:107.92px;font-size:11.2px;color:#a6a6a6;">Вставить</div>
<div class="t" style="left:6.5px;top:143.43px;font-size:11.3px;color:#262626;">Буфер обмена</div>
<div class="t" style="left:184.5px;top:142.84px;font-size:12px;color:#262626;">Шрифт</div>
<div class="t" style="left:330.0px;top:143.18px;font-size:11.6px;color:#262626;">Выравнивание</div>
<div class="t" style="left:461.0px;top:142.84px;font-size:12px;color:#262626;">Число</div>
<div class="t" style="left:621.0px;top:142.84px;font-size:12px;color:#262626;">Стили</div>
<div class="t" style="left:775.0px;top:142.84px;font-size:12px;color:#262626;">Ячейки</div>
<div class="t" style="left:851.0px;top:143.01px;font-size:11.8px;color:#262626;">Редактирование</div>
<div class="t" style="left:116.5px;top:81.64px;font-size:12px;color:#262626;">Calibri</div>
<div class="t" style="left:227.5px;top:81.64px;font-size:12px;color:#262626;">12</div>
<div class="t" style="left:272.5px;top:82.00px;font-size:13px;color:#444;">A</div>
<div class="t" style="left:296.0px;top:83.69px;font-size:11px;color:#444;">A</div>
<div class="t" style="left:117.5px;top:111.92px;font-size:12.5px;color:#444;font-weight:bold;">Ж</div>
<div class="t" style="left:141.0px;top:111.92px;font-size:12.5px;color:#444;font-weight:bold;font-style:italic;">К</div>
<div class="t" style="left:163.0px;top:111.92px;font-size:12.5px;color:#444;font-weight:bold;">Ч</div>
<div class="t" style="left:283.0px;top:111.00px;font-size:13px;color:#444;">A</div>
<div class="t" style="left:400.5px;top:70.11px;font-size:10.5px;color:#555;">ab</div>
<div class="t" style="left:401.0px;top:77.61px;font-size:10.5px;color:#555;">c</div>
<div class="t" style="left:450.5px;top:73.64px;font-size:12px;color:#262626;">Числовой</div>
<div class="t" style="left:486.0px;top:95.73px;font-size:14.5px;color:#444;">%</div>
<div class="t" style="left:506.5px;top:96.96px;font-size:9.5px;color:#444;">000</div>
<div class="t" style="left:457.0px;top:117.38px;font-size:9px;color:#444;">0</div>
<div class="t" style="left:451.0px;top:124.88px;font-size:9px;color:#444;">,00</div>
<div class="t" style="left:474.0px;top:117.38px;font-size:9px;color:#444;">,00</div>
<div class="t" style="left:478.0px;top:124.88px;font-size:9px;color:#444;">,0</div>
<div class="t" style="left:383.0px;top:120.53px;font-size:10px;color:#555;transform:rotate(-45deg);transform-origin:0 100%;">ab</div>
<div class="t" style="left:563.5px;top:73.34px;font-size:12px;color:#262626;">Условное форматирование</div>
<div class="t" style="left:563.5px;top:96.34px;font-size:12px;color:#262626;letter-spacing:-0.12px;">Форматировать как таблицу</div>
<div class="t" style="left:563.5px;top:119.44px;font-size:12px;color:#262626;">Стили ячеек</div>
<div class="t" style="left:772.5px;top:73.64px;font-size:12px;color:#262626;">Вставить</div>
<div class="t" style="left:772.5px;top:96.34px;font-size:12px;color:#262626;">Удалить</div>
<div class="t" style="left:772.5px;top:119.24px;font-size:12px;color:#262626;">Формат</div>
<div class="t" style="left:900.0px;top:70.60px;font-size:8.5px;color:#1e6fc8;font-weight:bold;">A</div>
<div class="t" style="left:900.5px;top:78.80px;font-size:8.5px;color:#777;">Я</div>
<div class="t" style="left:224.0px;top:175.00px;font-size:13px;color:#555;font-family:Liberation Serif;font-style:italic;font-weight:bold;"><i>f</i><span style="font-size:10px">x</span></div>
<div class="t" style="left:782.5px;top:10.84px;font-size:12px;color:#04723e;">Вход</div>
<div class="a" style="left:0;top:0;width:1px;height:723px;background:#04723e;"></div>
<div class="a" style="left:1012px;top:0;width:1px;height:723px;background:#04723e;"></div>
<div class="a" style="left:0;top:722px;width:1013px;height:1px;background:#04723e;"></div>
</body></html>
